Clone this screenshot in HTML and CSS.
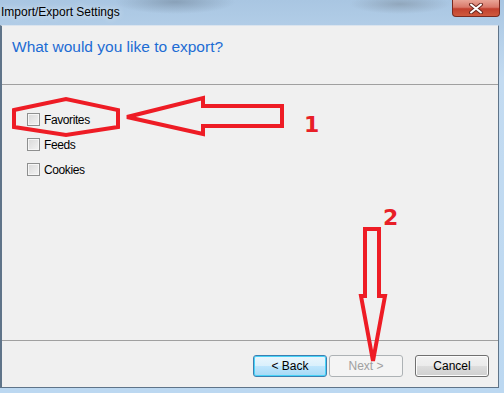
FILE: index.html
```html
<!DOCTYPE html>
<html lang="en">
<head>
    <meta charset="UTF-8">
    <meta name="viewport" content="width=device-width, initial-scale=1.0">
    <title>Import/Export Settings</title>
    <link rel="stylesheet" href="styles.css">
</head>
<body>
<div class="titlebar">
    <span class="title">Import/Export Settings</span>
    <button class="close" type="button">
        <svg width="16" height="11" viewBox="0 0 16 11">
            <path d="M3 1.5 L13 9.5 M13 1.5 L3 9.5" stroke="#6b2a22" stroke-width="4" stroke-linecap="round"/>
            <path d="M3 1.5 L13 9.5 M13 1.5 L3 9.5" stroke="#ffffff" stroke-width="2" stroke-linecap="round"/>
        </svg>
    </button>
</div>

<div class="client">
    <div class="header">
        <h1>What would you like to export?</h1>
    </div>

    <div class="options">
        <label class="option"><span class="check"></span>Favorites</label>
        <label class="option"><span class="check"></span>Feeds</label>
        <label class="option"><span class="check"></span>Cookies</label>
    </div>

    <div class="footer">
        <button class="btn default" type="button">&lt; Back</button>
        <button class="btn" type="button" disabled>Next &gt;</button>
        <button class="btn cancel" type="button">Cancel</button>
    </div>
</div>

<!-- red annotations drawn over the dialog -->
<svg class="marks" width="504" height="393" viewBox="0 0 504 393">
    <g fill="none" stroke="#ee1c25" stroke-width="4" stroke-linejoin="miter">
        <polygon points="14,110 66,99 118,110 118,127 66,135 14,127"/>
        <polygon points="127,117 203,98 203,106 282,106 282,126 203,126 203,134"/>
        <polygon points="365,229 379,229 379,296 385,296 373,361 361,296 365,296"/>
    </g>
</svg>
<span class="mark one">1</span>
<span class="mark two">2</span>
</body>
</html>
```

FILE: styles.css
```css
body {
    margin: 0;
    width: 504px;
    height: 393px;
    overflow: hidden;
    font-family: "Liberation Sans", Arial, sans-serif;
    background:
        radial-gradient(ellipse 60px 12px at 175px 2px, rgba(110, 130, 150, 0.55), transparent),
        radial-gradient(ellipse 50px 10px at 400px 4px, rgba(120, 135, 150, 0.5), transparent),
        linear-gradient(180deg, #a9c6e2 0%, #c3dbf1 20%, #bcd8f1 100%);
    position: relative;
}

.titlebar {
    height: 25px;
    display: flex;
    justify-content: space-between;
    align-items: flex-start;
}

.title {
    font-size: 12px;
    color: #000;
    padding: 5px 0 0 1px;
    text-shadow: 0 0 6px rgba(255, 255, 255, 0.8);
}

.close {
    width: 48px;
    height: 17px;
    margin-right: 4px;
    padding: 0;
    border: 1px solid #7a2a20;
    border-top: none;
    border-radius: 0 0 4px 4px;
    background: linear-gradient(180deg, #e9a597 0%, #d9796a 45%, #c2402e 55%, #cf5a3e 100%);
    display: flex;
    justify-content: center;
    align-items: center;
}

.client {
    width: 496px;
    height: 361px;
    background-color: #f0f0f0;
    border: 1px solid #5f7489;
    border-left-width: 2px;
    border-top-color: #dbe4ee;
    display: flex;
    flex-direction: column;
}

.header {
    height: 59px;
    border-bottom: 1px solid #a0a0a0;
    box-sizing: border-box;
    padding: 12px 0 0 10px;
}

.header h1 {
    margin: 0;
    font-size: 15.5px;
    font-weight: normal;
    color: #1d6cd4;
}

.options {
    flex: 1;
    padding: 22px 0 0 25px;
    border-bottom: 1px solid #a0a0a0;
}

.option {
    height: 25px;
    display: flex;
    align-items: center;
    font-size: 12px;
    letter-spacing: -0.4px;
    color: #000;
}

.check {
    width: 11px;
    height: 11px;
    margin-right: 4px;
    border: 1px solid #8e8f8f;
    background: linear-gradient(135deg, #d8d8d8 0%, #f4f4f4 100%);
    box-shadow: inset 0 0 0 1px #f6f6f6;
}

.footer {
    height: 46px;
    box-sizing: border-box;
    padding: 14px 9px 0 0;
    display: flex;
    justify-content: flex-end;
    align-items: flex-start;
}

.btn {
    width: 74px;
    height: 22px;
    margin-left: 2px;
    font-family: "Liberation Sans", Arial, sans-serif;
    font-size: 12px;
    color: #000;
    border: 1px solid #707070;
    border-radius: 3px;
    background: linear-gradient(180deg, #f2f2f2 0%, #ebebeb 50%, #dddddd 51%, #cfcfcf 100%);
    box-shadow: inset 0 0 0 1px #fcfcfc;
}

.btn.default {
    border-color: #3c7fb1;
    box-shadow: inset 0 0 0 1px #48d3f8;
    background: linear-gradient(180deg, #eaf6fd 0%, #d9f0fc 50%, #bee6fd 51%, #a7d9f5 100%);
}

.btn:disabled {
    color: #a0a0a0;
    border-color: #adb2b5;
    background: #f4f4f4;
    box-shadow: none;
}

.btn.cancel {
    margin-left: 12px;
}

.marks {
    position: absolute;
    left: 0;
    top: 0;
    pointer-events: none;
}

.mark {
    position: absolute;
    font-family: "DejaVu Sans", sans-serif;
    font-weight: bold;
    font-size: 22px;
    line-height: 22px;
    color: #e81f27;
}

.mark.one {
    left: 304px;
    top: 114px;
}

.mark.two {
    left: 383px;
    top: 207px;
}
```
